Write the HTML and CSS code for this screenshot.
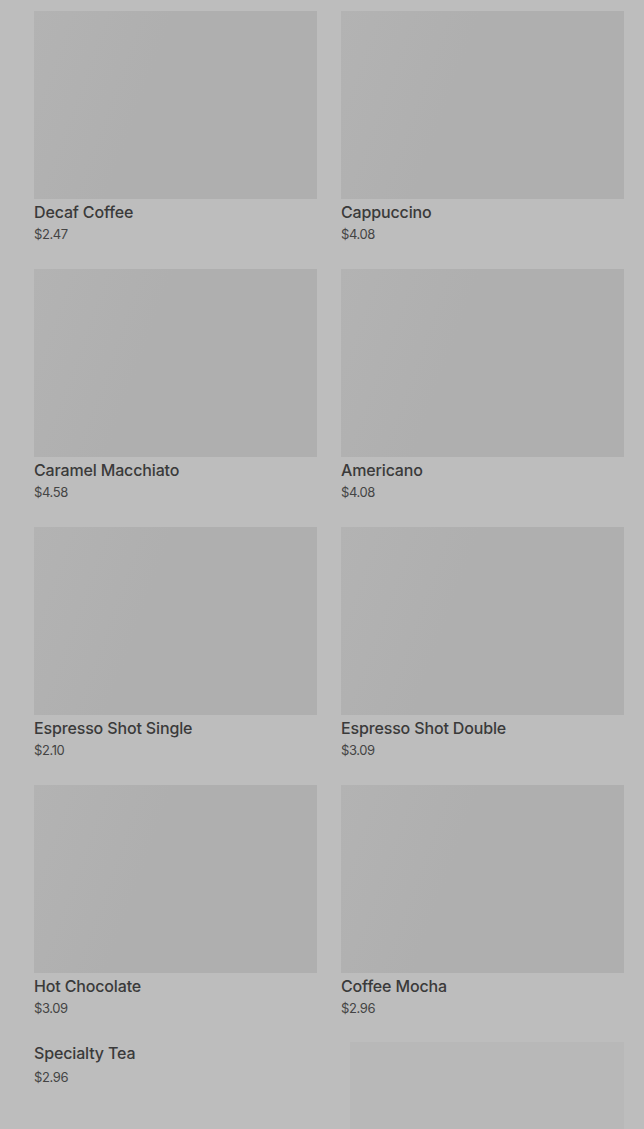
FILE: index.html
```html
<!DOCTYPE html>
<html>
<head>
    <title>Menu</title>
    <link rel="stylesheet" href="styles.css">
</head>
<body>
    <div class="menu-grid">
        <div class="item">
            <div class="item-image"></div>
            <div class="item-name">Decaf Coffee</div>
            <div class="item-price">$2.47</div>
        </div>
        <div class="item">
            <div class="item-image"></div>
            <div class="item-name">Cappuccino</div>
            <div class="item-price">$4.08</div>
        </div>
        <div class="item">
            <div class="item-image"></div>
            <div class="item-name">Caramel Macchiato</div>
            <div class="item-price">$4.58</div>
        </div>
        <div class="item">
            <div class="item-image"></div>
            <div class="item-name">Americano</div>
            <div class="item-price">$4.08</div>
        </div>
        <div class="item">
            <div class="item-image"></div>
            <div class="item-name">Espresso Shot Single</div>
            <div class="item-price">$2.10</div>
        </div>
        <div class="item">
            <div class="item-image"></div>
            <div class="item-name">Espresso Shot Double</div>
            <div class="item-price">$3.09</div>
        </div>
        <div class="item">
            <div class="item-image"></div>
            <div class="item-name">Hot Chocolate</div>
            <div class="item-price">$3.09</div>
        </div>
        <div class="item">
            <div class="item-image"></div>
            <div class="item-name">Coffee Mocha</div>
            <div class="item-price">$2.96</div>
        </div>
        <div class="item no-image">
            <div class="item-name">Specialty Tea</div>
            <div class="item-price">$2.96</div>
        </div>
        <div class="item">
            <div class="item-image loading"></div>
        </div>
    </div>
</body>
</html>
```

FILE: styles.css
```css
* {
    box-sizing: border-box;
    font-family: Inter, "Noto Sans", sans-serif;
}
body {
    margin: 0;
    padding: 11px 20px 0 34px;
    background-color: #bdbdbd;
    color: #3a3a3a;
    height: 100vh;
    overflow: hidden;
}
.menu-grid {
    display: grid;
    grid-template-columns: 1fr 1fr;
    column-gap: 24px;
    row-gap: 26px;
}
.item-image {
    height: 188px;
    background: linear-gradient(110deg, #b3b3b3, #afafaf 40%, #afafaf);
}
.item-image.loading {
    margin: -1px 0 0 9px;
    height: 120px;
    background: #b8b8b8;
}
.item-name {
    margin-top: 3px;
    font-size: 16px;
    line-height: 20px;
    font-weight: 500;
    letter-spacing: -0.15px;
    color: #3a3a3a;
}
.item-price {
    margin-top: 3px;
    font-size: 13px;
    line-height: 18px;
    letter-spacing: -0.4px;
    color: #444;
}
.no-image .item-name {
    margin-top: 0;
}
.no-image .item-price {
    margin-top: 5px;
}
```
